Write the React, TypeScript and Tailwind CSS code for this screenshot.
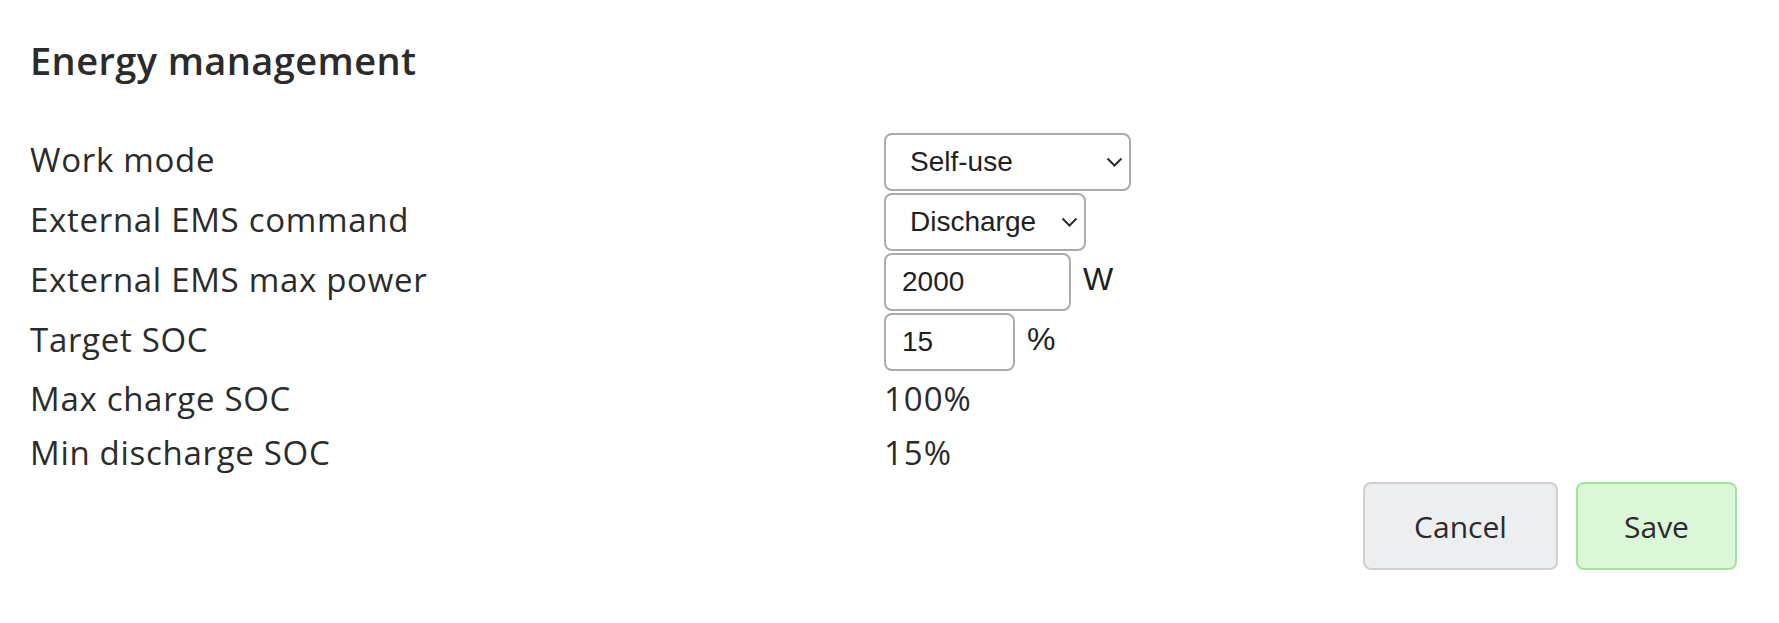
import { useState } from "react";

const labelFont = { fontFamily: '"Open Sans", "Noto Sans", sans-serif' };
const controlFont = { fontFamily: '"Liberation Sans", Arial, sans-serif' };

function Chevron() {
  return (
    <svg width="17" height="10" viewBox="0 0 17 10" className="pointer-events-none absolute right-[8px] top-1/2 -translate-y-1/2">
      <path d="M1.5 1.5 L8.5 8.5 L15.5 1.5" fill="none" stroke="#2b2b2b" strokeWidth="2" />
    </svg>
  );
}

function Select({ value, options, width, onChange }: { value: string; options: string[]; width: string; onChange: (v: string) => void }) {
  return (
    <div className={`relative mt-[1px] h-[58px] ${width}`}>
      <select
        value={value}
        onChange={(e) => onChange(e.target.value)}
        style={controlFont}
        className="h-full w-full appearance-none rounded-[8px] border-2 border-[#ababab] bg-white pl-[24px] pr-[30px] text-[28px] text-[#1f1f1f] outline-none"
      >
        {options.map((o) => (
          <option key={o}>{o}</option>
        ))}
      </select>
      <Chevron />
    </div>
  );
}

function NumberInput({ value, width, unit, onChange }: { value: string; width: string; unit: string; onChange: (v: string) => void }) {
  return (
    <div className="mt-[1px] flex h-[58px] items-center">
      <input
        value={value}
        onChange={(e) => onChange(e.target.value)}
        style={controlFont}
        className={`h-full ${width} rounded-[8px] border-2 border-[#ababab] bg-white pl-[16px] text-[28px] text-[#1f1f1f] outline-none`}
      />
      <span style={controlFont} className="mb-[6px] ml-[12px] text-[32px] leading-none text-[#1f1f1f]">
        {unit}
      </span>
    </div>
  );
}

export default function App() {
  const [mode, setMode] = useState("Self-use");
  const [cmd, setCmd] = useState("Discharge");
  const [power, setPower] = useState("2000");
  const [target, setTarget] = useState("15");

  const label = "pt-[8px] text-[33px] leading-[40px] tracking-[0.7px] text-[#2b2b2b]";

  return (
    <div className="min-h-screen bg-white pl-[30px] pr-[42px] pt-[34px]" style={labelFont}>
      <h2 className="text-[38px] font-semibold leading-[52px] tracking-[0.4px] text-[#2b2b2b]">Energy management</h2>

      <div className="mt-[46px] grid grid-cols-[854px_1fr]">
        <div className="h-[60px]">
          <div className={label}>Work mode</div>
        </div>
        <div className="h-[60px]">
          <Select value={mode} onChange={setMode} width="w-[247px]" options={["Self-use", "Feed-in priority", "Back-up", "Manual"]} />
        </div>

        <div className="h-[60px]">
          <div className={label}>External EMS command</div>
        </div>
        <div className="h-[60px]">
          <Select value={cmd} onChange={setCmd} width="w-[202px]" options={["Charge", "Discharge", "Stop"]} />
        </div>

        <div className="h-[60px]">
          <div className={label}>External EMS max power</div>
        </div>
        <div className="h-[60px]">
          <NumberInput value={power} onChange={setPower} width="w-[187px]" unit="W" />
        </div>

        <div className="h-[60px]">
          <div className={label}>Target SOC</div>
        </div>
        <div className="h-[60px]">
          <NumberInput value={target} onChange={setTarget} width="w-[131px]" unit="%" />
        </div>

        <div className="text-[33px] leading-[54px] tracking-[0.7px] text-[#2b2b2b]">Max charge SOC</div>
        <div className="text-[33px] leading-[54px] tracking-[1px] text-[#2b2b2b]">100%</div>

        <div className="text-[33px] leading-[54px] tracking-[0.7px] text-[#2b2b2b]">Min discharge SOC</div>
        <div className="text-[33px] leading-[54px] tracking-[1px] text-[#2b2b2b]">15%</div>
      </div>

      <div className="mt-[2px] flex justify-end gap-[18px]">
        <button className="h-[88px] w-[195px] rounded-[8px] border-2 border-[#cfd0d3] bg-[#eceef0] text-[30px] text-[#2b2b2b]">
          Cancel
        </button>
        <button className="h-[88px] w-[161px] rounded-[8px] border-2 border-[#a0e49b] bg-[#dcf7d8] text-[30px] text-[#2b2b2b]">
          Save
        </button>
      </div>
    </div>
  );
}
